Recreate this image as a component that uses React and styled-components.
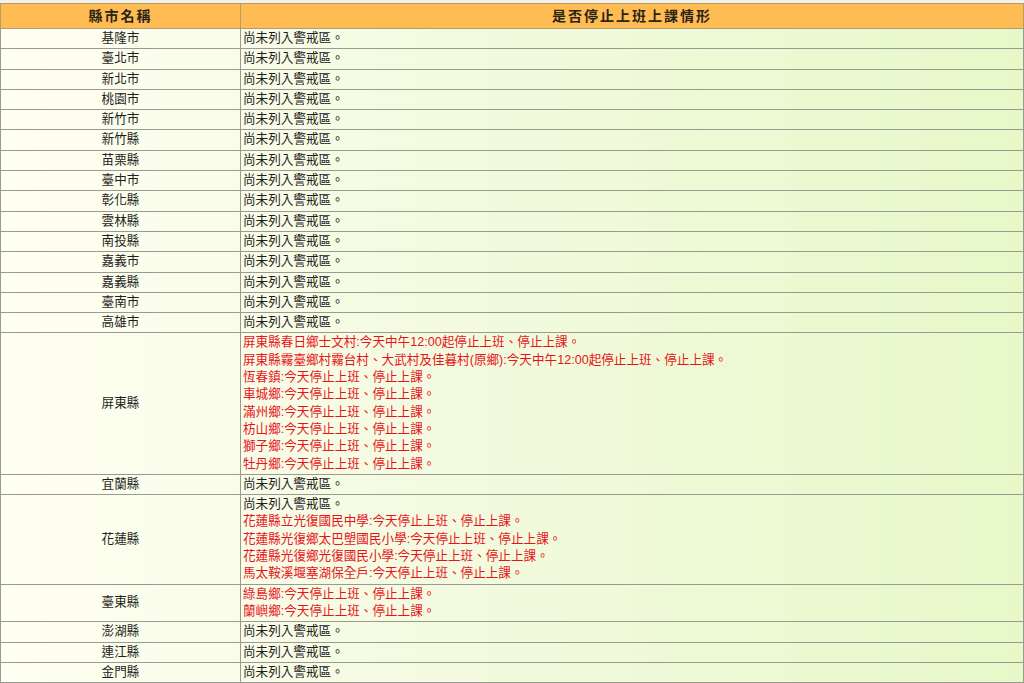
import React from 'react';
import styled, { createGlobalStyle } from 'styled-components';

const GlobalStyle = createGlobalStyle`
	html, body {
		margin: 0;
		padding: 0;
		background: #f4f1e6;
	}
	body {
		font-family: 'Liberation Sans', 'Noto Sans CJK TC', sans-serif;
	}
`;

const SAFE = '尚未列入警戒區。';

const rows = [
	{ city: '基隆市', lines: [{ text: SAFE }] },
	{ city: '臺北市', lines: [{ text: SAFE }] },
	{ city: '新北市', lines: [{ text: SAFE }] },
	{ city: '桃園市', lines: [{ text: SAFE }] },
	{ city: '新竹市', lines: [{ text: SAFE }] },
	{ city: '新竹縣', lines: [{ text: SAFE }] },
	{ city: '苗栗縣', lines: [{ text: SAFE }] },
	{ city: '臺中市', lines: [{ text: SAFE }] },
	{ city: '彰化縣', lines: [{ text: SAFE }] },
	{ city: '雲林縣', lines: [{ text: SAFE }] },
	{ city: '南投縣', lines: [{ text: SAFE }] },
	{ city: '嘉義市', lines: [{ text: SAFE }] },
	{ city: '嘉義縣', lines: [{ text: SAFE }] },
	{ city: '臺南市', lines: [{ text: SAFE }] },
	{ city: '高雄市', lines: [{ text: SAFE }] },
	{
		city: '屏東縣',
		lines: [
			{ text: '屏東縣春日鄉士文村:今天中午12:00起停止上班、停止上課。', alert: true },
			{ text: '屏東縣霧臺鄉村霧台村、大武村及佳暮村(原鄉):今天中午12:00起停止上班、停止上課。', alert: true },
			{ text: '恆春鎮:今天停止上班、停止上課。', alert: true },
			{ text: '車城鄉:今天停止上班、停止上課。', alert: true },
			{ text: '滿州鄉:今天停止上班、停止上課。', alert: true },
			{ text: '枋山鄉:今天停止上班、停止上課。', alert: true },
			{ text: '獅子鄉:今天停止上班、停止上課。', alert: true },
			{ text: '牡丹鄉:今天停止上班、停止上課。', alert: true },
		],
	},
	{ city: '宜蘭縣', lines: [{ text: SAFE }] },
	{
		city: '花蓮縣',
		lines: [
			{ text: SAFE },
			{ text: '花蓮縣立光復國民中學:今天停止上班、停止上課。', alert: true },
			{ text: '花蓮縣光復鄉太巴塱國民小學:今天停止上班、停止上課。', alert: true },
			{ text: '花蓮縣光復鄉光復國民小學:今天停止上班、停止上課。', alert: true },
			{ text: '馬太鞍溪堰塞湖保全戶:今天停止上班、停止上課。', alert: true },
		],
	},
	{
		city: '臺東縣',
		lines: [
			{ text: '綠島鄉:今天停止上班、停止上課。', alert: true },
			{ text: '蘭嶼鄉:今天停止上班、停止上課。', alert: true },
		],
	},
	{ city: '澎湖縣', lines: [{ text: SAFE }] },
	{ city: '連江縣', lines: [{ text: SAFE }] },
	{ city: '金門縣', lines: [{ text: SAFE }] },
];

const App = () => {
	return (
		<Page>
			<GlobalStyle />
			<StyledTable>
				<colgroup>
					<col style={{ width: '240px' }} />
					<col />
				</colgroup>
				<thead>
					<tr>
						<HeadCell>縣市名稱</HeadCell>
						<HeadCell>是否停止上班上課情形</HeadCell>
					</tr>
				</thead>
				<tbody>
					{rows.map((row) => (
						<tr key={row.city}>
							<CityCell>{row.city}</CityCell>
							<InfoCell>
								{row.lines.map((line, i) => (
									<Line key={i} $alert={line.alert}>
										{line.text}
									</Line>
								))}
							</InfoCell>
						</tr>
					))}
				</tbody>
			</StyledTable>
		</Page>
	);
};

const Page = styled.div`
	padding-top: 3px;
	min-height: 683px;
	box-sizing: border-box;
	background: linear-gradient(to bottom, #f4f1e6 0%, #f4f1e6 97%, #d9c9e0 100%);
`;

const StyledTable = styled.table`
	width: 100%;
	table-layout: fixed;
	border-collapse: collapse;
	font-size: 12.6px;
	color: #1e1e1e;
	background: linear-gradient(to right, #fffff2 0%, #f3fadf 45%, #e6f8c8 100%);
`;

const HeadCell = styled.th`
	background: #ffbc52;
	color: #2a2418;
	font-weight: bold;
	font-size: 14px;
	letter-spacing: 2px;
	line-height: 22px;
	padding: 1px 2px;
	border: 1px solid #b29c74;
	text-align: center;
`;

const CityCell = styled.td`
	text-align: center;
	vertical-align: middle;
	padding: 1px 2px;
	line-height: 17.3px;
	border: 1px solid #9a9b90;
`;

const InfoCell = styled.td`
	text-align: left;
	padding: 1px 2px;
	line-height: 17.3px;
	border: 1px solid #9a9b90;
`;

const Line = styled.div`
	color: ${({ $alert }) => ($alert ? '#e8141a' : '#1e1e1e')};
	white-space: nowrap;
`;

export default App;
